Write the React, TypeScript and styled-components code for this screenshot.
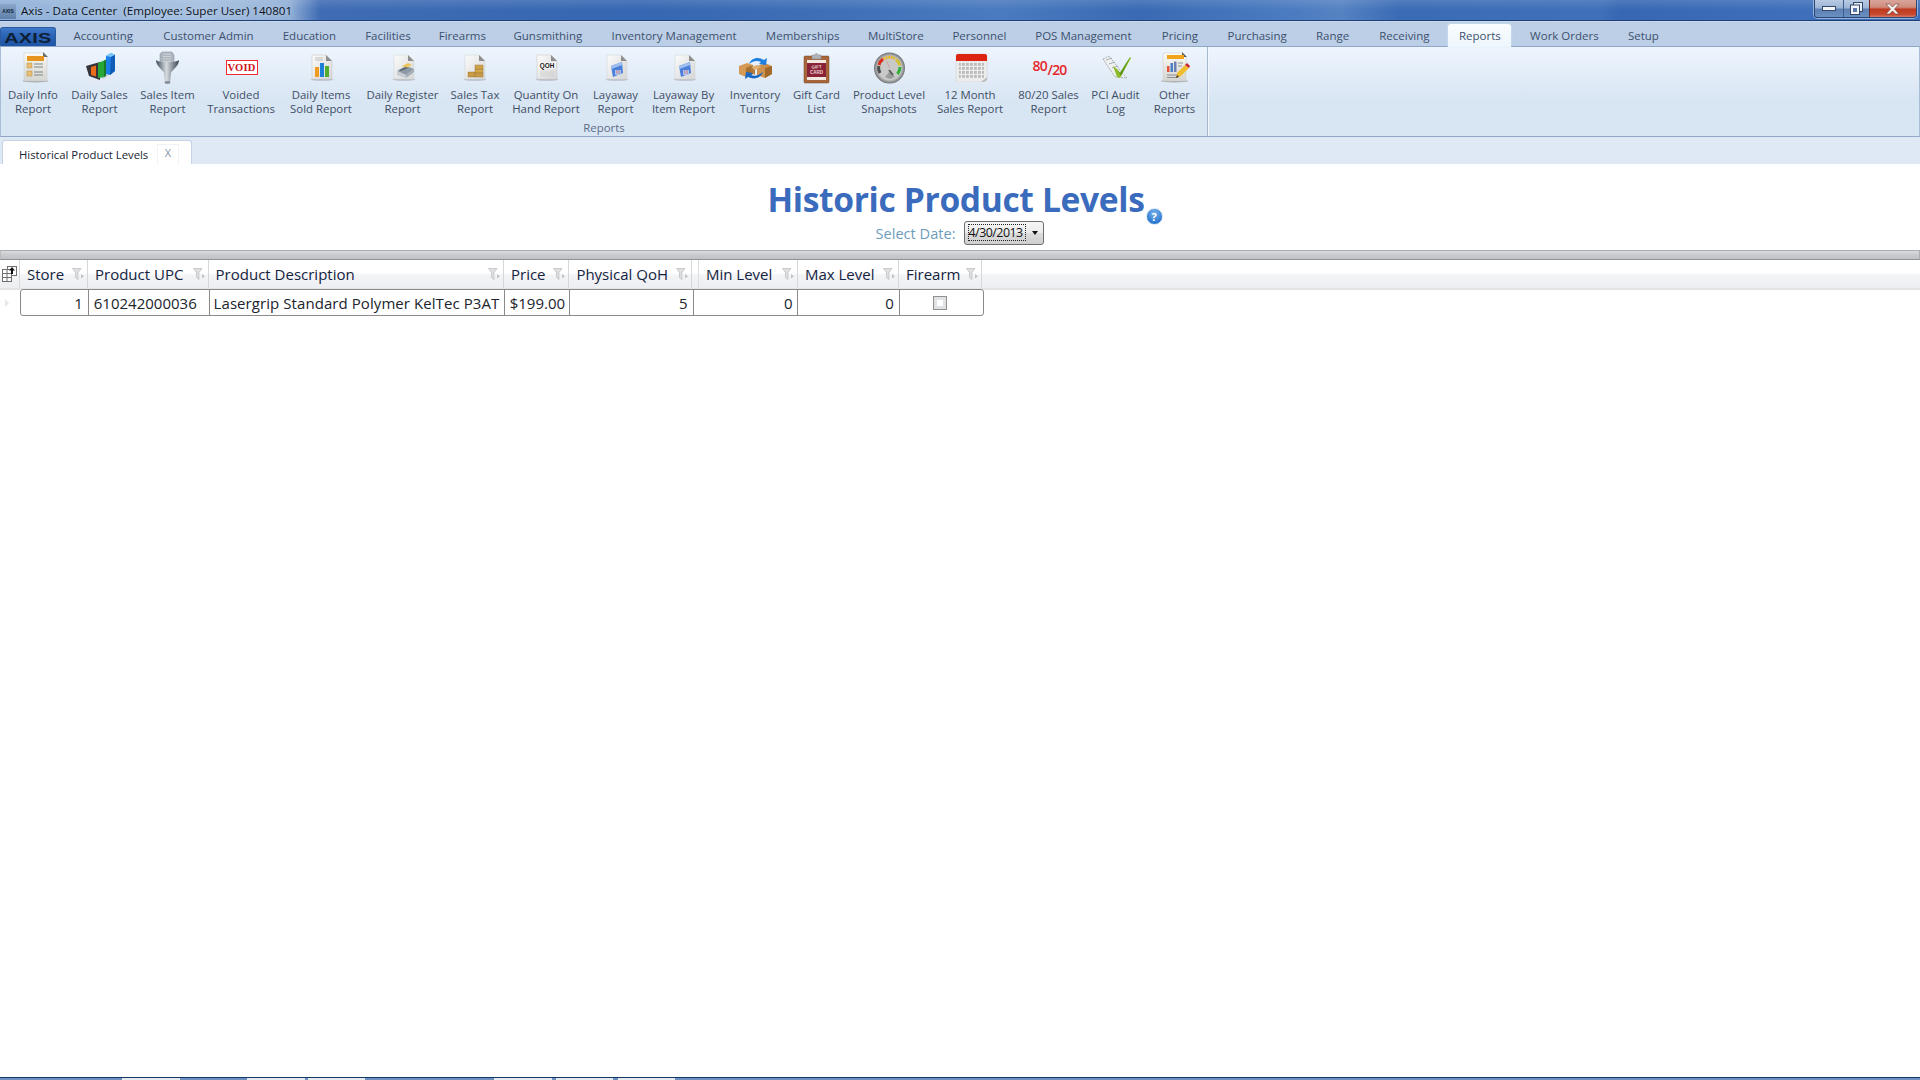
import React from "react";
import styled, { createGlobalStyle } from "styled-components";

const Global = createGlobalStyle`
  html, body { margin: 0; padding: 0; height: 100%; background: #fff; overflow: hidden; }
  #root { height: 100%; }
  * { box-sizing: border-box; }
`;

const Page = styled.div`
  height: 100vh;
  display: flex;
  flex-direction: column;
  font-family: "Open Sans", "Noto Sans", sans-serif;
  background: #fff;
`;

/* ---------- title bar ---------- */
const TitleBar = styled.header`
  height: 21px;
  flex: none;
  display: flex;
  align-items: flex-start;
  justify-content: space-between;
  padding-right: 3px;
  border-bottom: 1px solid #1d3f78;
  background:
    linear-gradient(180deg, rgba(255,255,255,.12), rgba(255,255,255,0) 50%),
    linear-gradient(90deg, #8fb0d8 0, #a5bfe0 200px, #90aed6 290px, #3f6cb4 320px, #3667b2 640px, #3d6eb6 800px, #4a7abf 1000px, #3a6ab3 1140px, #4b7bc0 1290px, #5582c2 1340px, #3a6bb5 1400px, #3f70b9 1600px, #3767b2 1620px, #3f6fba 1800px, #3f6fba 1920px);
`;

const TitleLeft = styled.div`
  display: flex;
  align-items: center;
  height: 20px;
`;

const AppIcon = styled.span`
  width: 16px;
  height: 15px;
  margin-top: 2px;
  margin-right: 5px;
  background: linear-gradient(180deg, #8aa6c8, #5f80ab);
  color: #0e1f38;
  font: 700 5px/15px "Liberation Sans", sans-serif;
  text-align: center;
`;

const TitleText = styled.span`
  font-size: 11.6px;
  color: #0b1220;
  white-space: pre;
  text-shadow: 0 0 6px rgba(255,255,255,.6);
`;

const WinButtons = styled.div`
  display: flex;
  height: 18px;
  width: 103px;
  border: 1px solid #2a4673;
  border-top: none;
  border-radius: 0 0 4px 4px;
  overflow: hidden;
  box-shadow: 0 0 0 1px rgba(255,255,255,.45);
`;

const WinButton = styled.div<{ $w: number; $close?: boolean }>`
  width: ${(p) => p.$w}px;
  display: flex;
  align-items: center;
  justify-content: center;
  border-left: 1px solid ${(p) => (p.$close ? "#6d2a20" : "#3c5d91")};
  background: ${(p) =>
    p.$close
      ? "linear-gradient(180deg, #d8a59b 0, #cf8b7c 42%, #bf3a20 55%, #c8492f 85%, #d97c68 100%)"
      : "linear-gradient(180deg, #b9cbe3 0, #9db5d5 45%, #5e80b4 55%, #6c90c2 100%)"};
  &:first-child { border-left: none; }
`;

/* ---------- ribbon tabs ---------- */
const MenuRow = styled.nav`
  height: 25px;
  flex: none;
  display: flex;
  align-items: flex-end;
  background: #bccfe6;
  border-top: 1px solid #c9d8ea;
  position: relative;
`;

const LogoTab = styled.div`
  width: 56px;
  height: 19px;
  border-radius: 3px 3px 0 0;
  border: 1px solid #2c5aa0;
  border-bottom: none;
  background: linear-gradient(180deg, #3e78ca 0, #2a62b4 45%, #1e55a6 100%);
  color: #0f2036;
  font: 900 15px/19px "Liberation Sans", sans-serif;
  text-align: center;
  overflow: hidden;
`;

const LogoWord = styled.span`
  display: inline-block;
  transform: scaleX(1.32);
  letter-spacing: .2px;
`;

const MenuTab = styled.div<{ $w: number; $active?: boolean }>`
  width: ${(p) => p.$w}px;
  height: 24px;
  flex: none;
  text-align: center;
  font-size: 11.5px;
  line-height: 27px;
  color: #3c516f;
  white-space: nowrap;
  ${(p) =>
    p.$active &&
    `
    height: 23px;
    line-height: 24px;
    margin-bottom: -1px;
    position: relative;
    z-index: 2;
    background: linear-gradient(180deg, #fafdff, #eef5fd);
    border-radius: 3px 3px 0 0;
    box-shadow: 0 0 2px #d6f0fb;
  `}
`;

/* ---------- ribbon panel ---------- */
const RibbonPanel = styled.section`
  height: 91px;
  flex: none;
  display: flex;
  background: linear-gradient(180deg, #eef5fd 0, #d8e5f3 60%, #d8e5f3 100%);
  border: 1px solid #8fa7c6;
  border-left-color: #a9bdd6;
  border-right-color: #a9bdd6;
`;

const RibbonGroup = styled.div`
  width: 1207px;
  flex: none;
  display: flex;
  flex-direction: column;
  border-right: 1px solid #a7b8cd;
  box-shadow: 1px 0 0 #f2f7fc;
`;

const GroupItems = styled.div`
  display: flex;
  padding-top: 4px;
  margin-left: -1px;
  height: 74px;
`;

const RibbonButton = styled.div<{ $w: number; $m: number }>`
  width: ${(p) => p.$w}px;
  margin-left: ${(p) => p.$m}px;
  flex: none;
  display: flex;
  flex-direction: column;
  align-items: center;
`;

const IconSlot = styled.div<{ $nudge: number }>`
  height: 33px;
  margin: 0 0 4px ${(p) => p.$nudge}px;
  display: flex;
  align-items: center;
  justify-content: center;
`;

const ButtonLabel = styled.span`
  font-size: 11.4px;
  line-height: 14px;
  color: #3f4f66;
  white-space: nowrap;
`;

const GroupLabel = styled.div`
  text-align: center;
  font-size: 11.4px;
  line-height: 14px;
  color: #5b6d86;
`;

const VoidStamp = styled.div`
  width: 32px;
  height: 15px;
  border: 1px solid #ee2b33;
  background: #fff;
  color: #d0141c;
  font: 700 10.5px/13px "Liberation Serif", serif;
  letter-spacing: .2px;
  text-align: center;
`;

const RatioMark = styled.div`
  width: 34px;
  height: 18px;
  position: relative;
  color: #e8262c;
  font: 600 14px/14px "Open Sans", sans-serif;
  letter-spacing: -.8px;
  & > b { font-weight: 600; position: absolute; left: 0; top: 0; }
  & > i { font-style: normal; position: absolute; left: 15px; top: 4px; }
`;

/* ---------- doc strip ---------- */
const DocStrip = styled.div`
  height: 27px;
  flex: none;
  display: flex;
  align-items: flex-end;
  padding-left: 2px;
  background: #dfe9f5;
`;

const DocTab = styled.div`
  width: 190px;
  height: 24px;
  display: flex;
  align-items: center;
  padding-left: 16px;
  background: #fff;
  border: 1px solid #c5d4e6;
  border-bottom: none;
  border-radius: 3px 3px 0 0;
  position: relative;
`;

const DocTabText = styled.span`
  font-size: 11.3px;
  color: #1a2432;
  white-space: nowrap;
  margin-top: 4px;
`;

const CloseBox = styled.span`
  position: absolute;
  left: 154px;
  top: 3px;
  width: 22px;
  height: 20px;
  border: 1px solid #f0f4f9;
  border-bottom: none;
  font-size: 11px;
  line-height: 15px;
  text-align: center;
  color: #8796aa;
`;

/* ---------- content ---------- */
const Content = styled.main`
  flex: 1;
  min-height: 0;
  display: flex;
  flex-direction: column;
`;

const Heading = styled.div`
  height: 86px;
  flex: none;
  display: flex;
  flex-direction: column;
  align-items: center;
`;

const TitleRow = styled.div`
  position: relative;
  margin-top: 15px;
  margin-left: -8px;
  height: 40px;
`;

const PageTitle = styled.h1`
  margin: 0;
  font-size: 33.6px;
  line-height: 40px;
  font-weight: 700;
  letter-spacing: -.35px;
  color: #3a6bbd;
  white-space: nowrap;
`;

const HelpDot = styled.span`
  position: absolute;
  left: calc(100% + 1px);
  top: 29px;
  width: 17px;
  height: 17px;
  border-radius: 50%;
  background: radial-gradient(circle at 50% 30%, #7cb4ec, #2c78cf 70%);
  border: 1px solid #d7e6f6;
  color: #fff;
  font: 700 11px/15px "Open Sans", sans-serif;
  text-align: center;
`;

const DateRow = styled.div`
  display: flex;
  align-items: center;
  margin-top: 2px;
  margin-left: -1px;
  gap: 8px;
`;

const DateLabel = styled.span`
  font-size: 14.6px;
  color: #6e9cbd;
  white-space: nowrap;
`;

const DateSelect = styled.div`
  width: 80px;
  height: 24px;
  display: flex;
  align-items: center;
  padding-left: 3px;
  border: 1px solid #6e6e6e;
  border-radius: 3px;
  background: linear-gradient(180deg, #f6f6f6 0, #ebebeb 48%, #dcdcdc 52%, #cfcfcf 100%);
`;

const DateValue = styled.span`
  width: 58px;
  height: 17px;
  margin-top: -2px;
  border: 1px dotted #222;
  font-size: 12.4px;
  line-height: 15px;
  letter-spacing: -.5px;
  color: #111;
  white-space: nowrap;
  overflow: hidden;
`;

const Caret = styled.span`
  margin-left: 6px;
  width: 0;
  height: 0;
  border-left: 3.5px solid transparent;
  border-right: 3.5px solid transparent;
  border-top: 4px solid #111;
`;

const Splitter = styled.div`
  height: 10px;
  flex: none;
  border: 1px solid #a9acb3;
  border-left-color: #bbb;
  background: linear-gradient(180deg, #d9dbde 0, #c8cacd 50%, #c0c2c6 100%);
  border-bottom-color: #8e9196;
`;

const GridHeader = styled.div`
  height: 30px;
  flex: none;
  display: flex;
  background: linear-gradient(180deg, #ffffff 0, #ffffff 45%, #f3f4f6 55%, #eceef1 100%);
  border-bottom: 2px solid #e3e4e6;
`;

const CornerCell = styled.div`
  width: 20px;
  flex: none;
  display: flex;
  align-items: center;
  justify-content: center;
  border-right: 1px solid #d8d8d8;
`;

const HeaderCell = styled.div<{ $w: number }>`
  width: ${(p) => p.$w}px;
  flex: none;
  display: flex;
  align-items: center;
  justify-content: space-between;
  padding: 0 2px 0 7px;
  border-right: 1px solid #d6d7da;
  font-size: 15px;
  color: #14233f;
  white-space: nowrap;
`;

const HeaderSpacer = styled.div<{ $w: number }>`
  width: ${(p) => p.$w}px;
  flex: none;
  border-right: 1px solid #dcdde0;
`;

const GridRowWrap = styled.div`
  display: flex;
  height: 27px;
  flex: none;
  margin-top: -1px;
  position: relative;
`;

const RowIndicator = styled.div`
  width: 20px;
  flex: none;
  display: flex;
  align-items: center;
  padding-left: 5px;
`;

const IndicatorArrow = styled.span`
  width: 0;
  height: 0;
  border-top: 4px solid transparent;
  border-bottom: 4px solid transparent;
  border-left: 4px solid #e6e8ec;
`;

const DataRow = styled.div`
  display: flex;
  border: 1px solid #8a8a8a;
  border-radius: 3px;
  background: #fff;
`;

const DataCell = styled.div<{ $w: number; $right?: boolean; $center?: boolean }>`
  width: ${(p) => p.$w}px;
  flex: none;
  display: flex;
  align-items: center;
  justify-content: ${(p) => (p.$right ? "flex-end" : p.$center ? "center" : "flex-start")};
  padding: 0 5px;
  font-size: 15px;
  color: #20242c;
  white-space: nowrap;
  border-right: 1px solid #8a8a8a;
  &:last-child { border-right: none; }
`;

const DescText = styled.span`
  margin-left: -1px;
  letter-spacing: .07px;
`;

const CheckBox = styled.span`
  width: 14px;
  height: 14px;
  margin-right: 3px;
  border: 1px solid #8f8f8f;
  background: #fff;
  box-shadow: inset 0 0 0 1px #e2e2e2, inset 0 0 0 3px #dfe3e8;
`;

const Filler = styled.div`
  flex: 1;
  min-height: 0;
`;

/* ---------- task bar sliver ---------- */
const TaskBar = styled.footer`
  height: 2px;
  flex: none;
  display: flex;
  background: #6f8fc0;
  box-shadow: 0 -1px 0 #123a63;
`;

const TaskSeg = styled.div<{ $w: number; $m: number }>`
  width: ${(p) => p.$w}px;
  margin-left: ${(p) => p.$m}px;
  flex: none;
  background: #e6ebf2;
`;

/* ---------- icons ---------- */
const Doc: React.FC<{ children?: React.ReactNode; faded?: boolean }> = ({ children, faded }) => (
  <svg width="24" height="27" viewBox="0 0 24 27">
    <defs>
      <linearGradient id="docFill" x1="0" x2="1" y1="0" y2="1">
        <stop offset="0" stopColor="#fbfbfb" />
        <stop offset="1" stopColor="#d6d6d6" />
      </linearGradient>
    </defs>
    <ellipse cx="12" cy="25.6" rx="11.5" ry="1.2" fill="#b9bfc6" />
    <path d="M2 1h14l6 6v18H2z" fill="url(#docFill)" stroke={faded ? "#d4d6d9" : "#c9cbce"} strokeWidth=".6" />
    <path d="M16 1l6 6h-6z" fill="#8e8e8e" />
    {children}
  </svg>
);

const DailyInfoIcon = () => (
  <svg width="27" height="31" viewBox="0 0 27 31">
    <defs>
      <linearGradient id="infoFill" x1="0" x2="0" y1="0" y2="1">
        <stop offset="0" stopColor="#fbfaf4" />
        <stop offset="1" stopColor="#d4d4d0" />
      </linearGradient>
    </defs>
    <ellipse cx="13.5" cy="29" rx="13" ry="1.4" fill="#a9adb2" />
    <path d="M2 1h19l4 4v24H2z" fill="url(#infoFill)" stroke="#c8c8c4" strokeWidth=".5" />
    <path d="M21 0l5 5h-5z" fill="#6d6d6d" />
    <rect x="5" y="4" width="17" height="5" fill="#e8951f" />
    <rect x="5" y="11" width="5" height="5" fill="#e9c073" stroke="#a87b34" strokeWidth=".4" />
    <rect x="5" y="19" width="5" height="5" fill="#e9c073" stroke="#a87b34" strokeWidth=".4" />
    <path d="M12 12h9M12 15h9M12 20h9M12 23h9" stroke="#7f8389" strokeWidth="1" />
  </svg>
);

const DailySalesIcon = () => (
  <svg width="29" height="30" viewBox="0 0 29 30">
    <path d="M2 22l16 4 8-7-8-2z" fill="#c9ccd6" />
    <path d="M3 27l15 3 9-9" stroke="#e4e7ef" strokeWidth="1" fill="none" />
    <path d="M0 13l14-4v18L3 23z" fill="#36343a" />
    <path d="M5 14l5-1.5v11L5 22z" fill="#ec6c1a" />
    <path d="M12 10l6-2.5V24l-6 1z" fill="#27a736" />
    <path d="M18 7.5l2-1V23l-2 1z" fill="#187a26" />
    <path d="M20 3l5-3 4 2v16l-5 4-4-1z" fill="#1b7fe6" />
    <path d="M25 0l4 2-4 2-5-1z" fill="#7cc8f7" />
    <path d="M25 4l4-2v16l-5 4z" fill="#0f5cb8" />
  </svg>
);

const FunnelIcon = () => (
  <svg width="25" height="33" viewBox="0 0 25 33">
    <defs>
      <linearGradient id="funnel" x1="0" x2="1">
        <stop offset="0" stopColor="#3e4a5a" />
        <stop offset=".45" stopColor="#d6dbdf" />
        <stop offset="1" stopColor="#3a4554" />
      </linearGradient>
    </defs>
    <path d="M7 1h10l2 3v9H5V3z" fill="#aeb6bd" stroke="#7e8690" strokeWidth=".5" />
    <path d="M8 3h8M8 5.5h8M8 8h8M8 10.5h8" stroke="#cdd2d6" strokeWidth="1" />
    <path d="M1 9c3 3 20 3 23 0 0 6-6 9-8 13l-1 10-5 0-1-10C7 18 1 15 1 9z" fill="url(#funnel)" />
    <ellipse cx="12.5" cy="31.5" rx="3" ry="1.2" fill="#7d858f" />
  </svg>
);

const DailyItemsIcon = () => (
  <Doc>
    <rect x="5" y="13" width="4" height="10" fill="#ef9b21" />
    <rect x="10" y="9" width="4" height="14" fill="#1d7fd7" />
    <rect x="15" y="12" width="4" height="11" fill="#52ac2f" />
    <path d="M5 4h8M5 6h8" stroke="#b2b2b2" strokeWidth=".8" />
  </Doc>
);

const RegisterIcon = () => (
  <Doc faded>
    <path d="M5 17l9-5 8 3-8 6z" fill="#8e99a6" />
    <path d="M5 17l9 4v3l-9-3z" fill="#c6ccd2" />
    <path d="M14 21l8-6v3l-8 6z" fill="#a4adb6" />
    <path d="M10 12l6-3 4 2-6 3z" fill="#ecc657" />
    <path d="M7 16l7-3 2 1-7 3z" fill="#5c6773" />
  </Doc>
);

const TaxIcon = () => (
  <Doc faded>
    <rect x="5" y="18" width="7" height="5" fill="#c79a45" stroke="#96722d" strokeWidth=".4" />
    <rect x="12" y="15" width="8" height="4" fill="#d3a64d" stroke="#96722d" strokeWidth=".4" />
    <rect x="12" y="19" width="8" height="4" fill="#c79a45" stroke="#96722d" strokeWidth=".4" />
    <rect x="12" y="11" width="8" height="4" fill="#cfa24b" stroke="#96722d" strokeWidth=".4" />
  </Doc>
);

const QohIcon = () => (
  <Doc>
    <rect x="3" y="8" width="18" height="7" fill="#f4f4f4" />
    <text x="12" y="14" textAnchor="middle" fontFamily="Liberation Sans" fontWeight="700" fontSize="6.4" fill="#161616">QOH</text>
    <path d="M5 18h14M5 20h14M5 22h14" stroke="#c8c8c8" strokeWidth=".7" />
  </Doc>
);

const LayawayIcon = () => (
  <Doc faded>
    <path d="M6 12l11-4 1 11-10 4z" fill="#4b7fdb" />
    <path d="M6 12l11-4 .4 3-11 4z" fill="#9fc0ef" />
    <path d="M10 16h6v5h-6z" fill="#a9c7f1" />
    <path d="M11 17h1.5M13.5 17h1.5M11 19h1.5M13.5 19h1.5" stroke="#e2574c" strokeWidth=".8" />
  </Doc>
);

const TurnsIcon = () => (
  <svg width="33" height="22" viewBox="0 0 33 22">
    <path d="M0 9l8-3 6 2v9l-7 3-7-3z" fill="#d49a55" />
    <path d="M7 11l7-3v9l-7 3z" fill="#a96f2d" />
    <path d="M18 9l8-3 7 3v8l-7 4-8-3z" fill="#cd934e" />
    <path d="M26 11l7-2v8l-7 4z" fill="#a16a2b" />
    <path d="M10 7c2-6 9-8 15-4l3-2-1 7-7-1 2-2c-4-2-8-1-12 2z" fill="#1f7fe0" />
    <path d="M24 15c-2 6-9 8-15 5l-3 2 1-7 7 1-2 2c4 2 8 0 12-3z" fill="#1767c4" />
    <path d="M12 10l6-2 4 2-6 3z" fill="#e0ae6f" />
    <path d="M12 10l4 3v5l-4-3z" fill="#b47a39" />
  </svg>
);

const GiftIcon = () => (
  <svg width="27" height="32" viewBox="0 0 27 32">
    <rect x="1" y="4" width="25" height="27" rx="1" fill="#a7663a" stroke="#7b4824" strokeWidth=".5" />
    <rect x="4" y="8" width="19" height="20" fill="#efe9e2" />
    <rect x="4" y="11" width="19" height="14" fill="#8a2337" />
    <text x="13.5" y="16.5" textAnchor="middle" fontFamily="Liberation Sans" fontWeight="700" fontSize="4.5" fill="#e8d6d6" transform="rotate(-4 13 16)">GIFT</text>
    <text x="13.5" y="22" textAnchor="middle" fontFamily="Liberation Sans" fontWeight="700" fontSize="4.5" fill="#e8d6d6">CARD</text>
    <path d="M9 7V3h3a1.5 1.5 0 013 0h3v4z" fill="#aeb3b8" stroke="#858a90" strokeWidth=".5" />
  </svg>
);

const GaugeIcon = () => (
  <svg width="31" height="32" viewBox="0 0 31 32">
    <defs>
      <radialGradient id="gaugeRim">
        <stop offset=".75" stopColor="#c9cac8" />
        <stop offset="1" stopColor="#6f7275" />
      </radialGradient>
    </defs>
    <circle cx="15.5" cy="16" r="15.5" fill="url(#gaugeRim)" />
    <path d="M6 21A10 10 0 014.7 14" stroke="#4d4d4d" strokeWidth="3" fill="none" />
    <path d="M5 13a11 11 0 014-6" stroke="#d92a1c" strokeWidth="3" fill="none" />
    <path d="M9.5 7a11 11 0 0112 0" stroke="#e6b52a" strokeWidth="3" fill="none" strokeDasharray="1.8 .7" />
    <path d="M22 7.5a11 11 0 014 6" stroke="#d2bf35" strokeWidth="3" fill="none" />
    <path d="M26 15a11 11 0 01-2.5 7" stroke="#2fb13a" strokeWidth="3" fill="none" />
    <path d="M15.5 16l-3-7" stroke="#c9a3a0" strokeWidth="1" />
    <path d="M11 25l5-6 5 6-5 2z" fill="#9a9c9e" />
    <path d="M15 18l4 5" stroke="#5b5c5e" strokeWidth="2" />
  </svg>
);

const CalendarIcon = () => (
  <svg width="33" height="29" viewBox="0 0 33 29">
    <defs>
      <pattern id="calDots" width="4" height="4" patternUnits="userSpaceOnUse" x="3" y="10">
        <rect width="2.8" height="2.8" fill="#bbbbbb" />
      </pattern>
    </defs>
    <path d="M1 3q0-2 2-2h27q2 0 2 2v24q-2 2-4 2H3q-2 0-2-2z" fill="#ececec" stroke="#cfcfcf" strokeWidth=".5" />
    <path d="M1 3q0-2 2-2h27q2 0 2 2v5H1z" fill="#db2412" />
    <rect x="4" y="10" width="25" height="16" fill="url(#calDots)" />
    <path d="M26 29l6-5v3q-2 2-4 2z" fill="#bdbdbd" />
  </svg>
);

const PciIcon = () => (
  <svg width="30" height="23" viewBox="0 0 30 23">
    <path d="M1 3l6-3 14 18 4 4-12-1z" fill="#eef0f1" stroke="#7f868c" strokeWidth=".6" strokeDasharray="2 .8" />
    <path d="M4 4l6-2M7 8l6-2M10 12l6-2" stroke="#a9aeb3" strokeWidth="1" />
    <path d="M11 10l4 3 3 4 10-16 1 1-11 20-3-1z" fill="#8cbc2a" />
    <path d="M15 13l3 4 10-16-9 19z" fill="#5c9417" />
  </svg>
);

const OtherIcon = () => (
  <svg width="29" height="31" viewBox="0 0 29 31">
    <defs>
      <linearGradient id="otherFill" x1="0" x2="0" y1="0" y2="1">
        <stop offset="0" stopColor="#fbfaf4" />
        <stop offset="1" stopColor="#d4d4d0" />
      </linearGradient>
    </defs>
    <ellipse cx="13.5" cy="29" rx="13.5" ry="1.4" fill="#a9adb2" />
    <path d="M2 1h19l4 4v24H2z" fill="url(#otherFill)" stroke="#c8c8c4" strokeWidth=".5" />
    <path d="M21 0l5 5h-5z" fill="#5f5f5f" />
    <rect x="6" y="3" width="17" height="4" fill="#f0a41c" />
    <rect x="6" y="14" width="2.5" height="6" fill="#e1553c" />
    <rect x="9.5" y="11" width="2.5" height="9" fill="#4b7fc9" />
    <rect x="13" y="9.5" width="2.5" height="10.5" fill="#6c7fb4" />
    <path d="M17 11h5M17 14h4M6 23h11M6 25.5h9" stroke="#8d9196" strokeWidth="1" />
    <path d="M15 26l1-5 8-8 4 3-8 8z" fill="#f0bd2f" />
    <path d="M24 13l2-2 3 3-1 2z" fill="#c8262e" />
    <path d="M15 26l1-3 2 2z" fill="#333" />
  </svg>
);

const FilterIcon = () => (
  <svg width="13" height="12" viewBox="0 0 13 12">
    <path d="M.5.5h8.5L6 4.5v7L3.5 9.5v-5z" fill="#dfe0e2" stroke="#b9bbbe" strokeWidth=".7" />
    <path d="M9 6l3 2.25-3 2.25z" fill="#c0c2c5" />
  </svg>
);

const ColumnChooserIcon = () => (
  <svg width="15" height="16" viewBox="0 0 15 16">
    <g fill="#fff" stroke="#6f6f6f" strokeWidth="1">
      <rect x="5.5" y=".5" width="9" height="9" />
      <rect x=".5" y="3.5" width="9" height="4" />
      <rect x=".5" y="7.5" width="9" height="4" />
      <rect x=".5" y="11.5" width="9" height="4" />
    </g>
    <path d="M5 3.5v12" stroke="#6f6f6f" />
    <path d="M10 1l3 3.5h-2V8H9V4.5H7z" fill="#111" />
  </svg>
);

const MinGlyph = () => (
  <svg width="14" height="7" viewBox="0 0 14 7"><rect x=".5" y="1.5" width="13" height="4" fill="#f4f6f9" stroke="#33496b" /></svg>
);
const RestoreGlyph = () => (
  <svg width="13" height="13" viewBox="0 0 13 13">
    <rect x="3.5" y=".5" width="9" height="9" fill="#e8edf4" stroke="#33496b" />
    <rect x=".5" y="3" width="9" height="9.5" fill="#f2f4f8" stroke="#33496b" />
    <rect x="3" y="6" width="4" height="4" fill="#5778a8" />
  </svg>
);
const CloseGlyph = () => (
  <svg width="15" height="12" viewBox="0 0 15 12">
    <path d="M1 1h3.5l3 3 3-3H14L9.5 6 14 11h-3.5l-3-3-3 3H1l4.5-5z" fill="#f3f0ee" stroke="#6b3a33" strokeWidth=".6" />
  </svg>
);

const VoidIcon = () => <VoidStamp>VOID</VoidStamp>;
const RatioIcon = () => (
  <RatioMark>
    <b>80</b>
    <i>/20</i>
  </RatioMark>
);

/* ---------- data ---------- */
const menuTabs: [string, number][] = [
  ["Accounting", 90.4], ["Customer Admin", 120], ["Education", 82], ["Facilities", 75], ["Firearms", 74],
  ["Gunsmithing", 97], ["Inventory Management", 155.5], ["Memberships", 101.5], ["MultiStore", 85],
  ["Personnel", 82], ["POS Management", 126], ["Pricing", 67], ["Purchasing", 87.5], ["Range", 63.5],
  ["Receiving", 80],
];

const ribbon: { l: number; r: number; a: string; b: string; icon: React.ReactNode; nudge: number }[] = [
  { l: 8, r: 58, a: "Daily Info", b: "Report", icon: <DailyInfoIcon />, nudge: 5 },
  { l: 71, r: 128, a: "Daily Sales", b: "Report", icon: <DailySalesIcon />, nudge: 1 },
  { l: 141, r: 194, a: "Sales Item", b: "Report", icon: <FunnelIcon />, nudge: 0 },
  { l: 208, r: 274, a: "Voided", b: "Transactions", icon: <VoidIcon />, nudge: 1 },
  { l: 290, r: 352, a: "Daily Items", b: "Sold Report", icon: <DailyItemsIcon />, nudge: 1 },
  { l: 366, r: 439, a: "Daily Register", b: "Report", icon: <RegisterIcon />, nudge: 2 },
  { l: 451, r: 499, a: "Sales Tax", b: "Report", icon: <TaxIcon />, nudge: 0 },
  { l: 512, r: 580, a: "Quantity On", b: "Hand Report", icon: <QohIcon />, nudge: 1 },
  { l: 594, r: 637, a: "Layaway", b: "Report", icon: <LayawayIcon />, nudge: 2 },
  { l: 651, r: 716, a: "Layaway By", b: "Item Report", icon: <LayawayIcon />, nudge: 3 },
  { l: 730, r: 780, a: "Inventory", b: "Turns", icon: <TurnsIcon />, nudge: 1 },
  { l: 793, r: 840, a: "Gift Card", b: "List", icon: <GiftIcon />, nudge: 0 },
  { l: 853, r: 925, a: "Product Level", b: "Snapshots", icon: <GaugeIcon />, nudge: 1 },
  { l: 937, r: 1003, a: "12 Month", b: "Sales Report", icon: <CalendarIcon />, nudge: 2 },
  { l: 1018, r: 1079, a: "80/20 Sales", b: "Report", icon: <RatioIcon />, nudge: 2 },
  { l: 1091, r: 1140, a: "PCI Audit", b: "Log", icon: <PciIcon />, nudge: 2 },
  { l: 1154, r: 1195, a: "Other", b: "Reports", icon: <OtherIcon />, nudge: 2 },
];

const segs: { w: number; m: number }[] = [
  { w: 58, m: 122 }, { w: 58, m: 67 }, { w: 57, m: 3 }, { w: 58, m: 129 }, { w: 57, m: 4 }, { w: 57, m: 5 },
];

export default function App() {
  return (
    <Page>
      <Global />
      <TitleBar>
        <TitleLeft>
          <AppIcon>AXIS</AppIcon>
          <TitleText>Axis - Data Center  (Employee: Super User) 140801</TitleText>
        </TitleLeft>
        <WinButtons>
          <WinButton $w={29}><MinGlyph /></WinButton>
          <WinButton $w={26}><RestoreGlyph /></WinButton>
          <WinButton $w={48} $close><CloseGlyph /></WinButton>
        </WinButtons>
      </TitleBar>

      <MenuRow>
        <LogoTab><LogoWord>AXIS</LogoWord></LogoTab>
        <MenuTab $w={2} />
        {menuTabs.map(([label, w]) => (
          <MenuTab key={label} $w={w}>{label}</MenuTab>
        ))}
        <MenuTab $w={4} />
        <MenuTab $w={63} $active>Reports</MenuTab>
        <MenuTab $w={106}>Work Orders</MenuTab>
        <MenuTab $w={52}>Setup</MenuTab>
      </MenuRow>

      <RibbonPanel>
        <RibbonGroup>
          <GroupItems>
            {ribbon.map((item, i) => (
              <RibbonButton key={item.a} $w={item.r - item.l} $m={item.l - (i ? ribbon[i - 1].r : 0)}>
                <IconSlot $nudge={item.nudge}>{item.icon}</IconSlot>
                <ButtonLabel>{item.a}</ButtonLabel>
                <ButtonLabel>{item.b}</ButtonLabel>
              </RibbonButton>
            ))}
          </GroupItems>
          <GroupLabel>Reports</GroupLabel>
        </RibbonGroup>
      </RibbonPanel>

      <DocStrip>
        <DocTab>
          <DocTabText>Historical Product Levels</DocTabText>
          <CloseBox>X</CloseBox>
        </DocTab>
      </DocStrip>

      <Content>
        <Heading>
          <TitleRow>
            <PageTitle>Historic Product Levels</PageTitle>
            <HelpDot>?</HelpDot>
          </TitleRow>
          <DateRow>
            <DateLabel>Select Date:</DateLabel>
            <DateSelect>
              <DateValue>4/30/2013</DateValue>
              <Caret />
            </DateSelect>
          </DateRow>
        </Heading>

        <Splitter />

        <GridHeader>
          <CornerCell><ColumnChooserIcon /></CornerCell>
          <HeaderCell $w={68}>Store<FilterIcon /></HeaderCell>
          <HeaderCell $w={120.6}>Product UPC<FilterIcon /></HeaderCell>
          <HeaderCell $w={295.4}>Product Description<FilterIcon /></HeaderCell>
          <HeaderCell $w={65.4}>Price<FilterIcon /></HeaderCell>
          <HeaderCell $w={123}>Physical QoH<FilterIcon /></HeaderCell>
          <HeaderSpacer $w={6.6} />
          <HeaderCell $w={99}>Min Level<FilterIcon /></HeaderCell>
          <HeaderCell $w={101}>Max Level<FilterIcon /></HeaderCell>
          <HeaderCell $w={83}>Firearm<FilterIcon /></HeaderCell>
        </GridHeader>

        <GridRowWrap>
          <RowIndicator><IndicatorArrow /></RowIndicator>
          <DataRow>
            <DataCell $w={67.8} $right>1</DataCell>
            <DataCell $w={120.8}>610242000036</DataCell>
            <DataCell $w={295.1}><DescText>Lasergrip Standard Polymer KelTec P3AT</DescText></DataCell>
            <DataCell $w={65.3}>$199.00</DataCell>
            <DataCell $w={123.6} $right>5</DataCell>
            <DataCell $w={104.9} $right>0</DataCell>
            <DataCell $w={101.3} $right>0</DataCell>
            <DataCell $w={83.6} $center><CheckBox /></DataCell>
          </DataRow>
        </GridRowWrap>

        <Filler />
      </Content>

      <TaskBar>
        {segs.map((s) => (
          <TaskSeg key={`${s.w}-${s.m}`} $w={s.w} $m={s.m} />
        ))}
      </TaskBar>
    </Page>
  );
}
